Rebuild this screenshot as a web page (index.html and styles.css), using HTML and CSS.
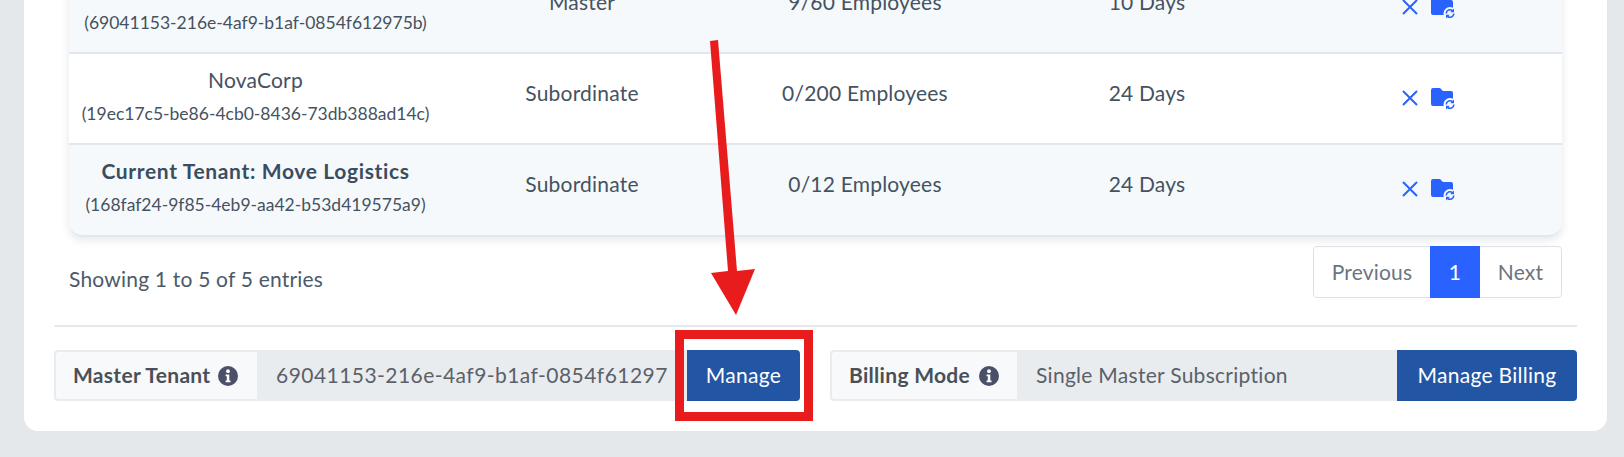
FILE: index.html
```html
<!DOCTYPE html>
<html lang="en">
<head>
<meta charset="utf-8">
<title>Tenants</title>
<link rel="stylesheet" href="styles.css">
</head>
<body>
<svg width="0" height="0" class="defs">
  <symbol id="x" viewBox="0 0 16 16"><path d="M1 1 15 15M15 1 1 15" fill="none" stroke="currentColor" stroke-width="2"/></symbol>
  <symbol id="folder" viewBox="0 0 25 23"><path d="M2 0h7l3 3h8a2 2 0 0 1 2 2v11a2 2 0 0 1-2 2H2a2 2 0 0 1-2-2V2a2 2 0 0 1 2-2z" fill="currentColor"/><circle cx="19" cy="16.500" r="6.500" fill="var(--badge)"/><path d="M15.200 16.500a3.800 3.800 0 0 1 6.300-2.800M22.800 16.500a3.800 3.800 0 0 1-6.300 2.800" fill="none" stroke="currentColor" stroke-width="1.600"/><path d="M23 11.500v3.800h-3.800zM15 21.500v-3.800h3.800z" fill="currentColor"/></symbol>
  <symbol id="info" viewBox="0 0 20 20"><circle cx="10" cy="10" r="10" fill="currentColor"/><circle cx="10" cy="5.200" r="1.900" fill="#fff"/><path d="M7.600 8.400h3.700v6h1.200v1.800H7.600v-1.800h1.200v-4.200H7.600z" fill="#fff"/></symbol>
</svg>
<main class="card">
  <div class="table-wrap">
    <table class="tenants">
      <colgroup><col class="c-name"><col class="c-type"><col class="c-emp"><col class="c-days"><col class="c-act"></colgroup>
      <tbody>
        <tr class="odd">
          <td class="name"><div class="tname">&nbsp;</div><div class="tid">(69041153-216e-4af9-b1af-0854f612975b)</div></td>
          <td>Master</td><td>9/60 Employees</td><td>10 Days</td>
          <td class="acts"><span class="actions"><svg class="ix"><use href="#x"/></svg><svg class="ifo"><use href="#folder"/></svg></span></td>
        </tr>
        <tr>
          <td class="name"><div class="tname">NovaCorp</div><div class="tid">(19ec17c5-be86-4cb0-8436-73db388ad14c)</div></td>
          <td>Subordinate</td><td>0/200 Employees</td><td>24 Days</td>
          <td class="acts"><span class="actions"><svg class="ix"><use href="#x"/></svg><svg class="ifo"><use href="#folder"/></svg></span></td>
        </tr>
        <tr class="odd">
          <td class="name"><div class="tname bold">Current Tenant: Move Logistics</div><div class="tid">(168faf24-9f85-4eb9-aa42-b53d419575a9)</div></td>
          <td>Subordinate</td><td>0/12 Employees</td><td>24 Days</td>
          <td class="acts"><span class="actions"><svg class="ix"><use href="#x"/></svg><svg class="ifo"><use href="#folder"/></svg></span></td>
        </tr>
      </tbody>
    </table>
    <div class="table-foot">
      <div class="showing">Showing 1 to 5 of 5 entries</div>
      <nav class="pager">
        <a class="pg pg-prev">Previous</a><a class="pg pg-cur">1</a><a class="pg pg-next">Next</a>
      </nav>
    </div>
  </div>
  <hr class="rule">
  <div class="groups">
    <div class="group g-master">
      <div class="g-label">Master Tenant <svg class="iinfo"><use href="#info"/></svg></div>
      <div class="g-value">69041153-216e-4af9-b1af-0854f61297</div>
      <button class="g-btn">Manage</button>
    </div>
    <div class="group g-billing">
      <div class="g-label">Billing Mode <svg class="iinfo"><use href="#info"/></svg></div>
      <div class="g-value">Single Master Subscription</div>
      <button class="g-btn">Manage Billing</button>
    </div>
  </div>
</main>
<svg class="annotation" viewBox="0 0 1624 457" width="1624" height="457">
  <path d="M710 41 718 40 737 271 755 269 736 315 711 273 728 271z" fill="#e81c1c"/>
  <path d="M675 330H813V421H675zM684 339V412H804V339z" fill="#e81c1c" fill-rule="evenodd"/>
</svg>
</body>
</html>
```
FILE: styles.css
```css
* { box-sizing: border-box; }
html, body { margin: 0; height: 457px; overflow: hidden; }
body {
  background: #e5e8eb;
  font-family: "Lato", "Noto Sans", sans-serif;
  font-size: 21px;
  letter-spacing: .2px;
  color: #45525f;
  position: relative;
}
.defs { position: absolute; }
.card {
  width: 1583px;
  margin: -37px 0 0 24px;
  padding: 0 30px 30px;
  background: #fff;
  border-radius: 0 0 14px 14px;
}
.table-wrap { padding: 0 15px; }
.tenants {
  width: 1493px;
  table-layout: fixed;
  border-collapse: separate;
  border-spacing: 0;
  border-radius: 0 0 14px 14px;
  box-shadow: 0 3px 8px rgba(40, 60, 90, .12);
}
.c-name { width: 373px; }
.c-type { width: 280px; }
.c-emp { width: 286px; }
.c-days { width: 278px; }
.c-act { width: 276px; }
.tenants td {
  height: 91px;
  padding: 19px 8px 0;
  text-align: center;
  vertical-align: top;
  line-height: 40px;
  border-bottom: 2px solid #e3e7eb;
  background: #fff;
}
.tenants tr.odd td { background: #f6f9fc; --badge: #f6f9fc; }
.tenants tr { --badge: #fff; }
.tenants tr:last-child td { height: 92px; }
.tenants tr:last-child td:first-child { border-bottom-left-radius: 14px; }
.tenants tr:last-child td:last-child { border-bottom-right-radius: 14px; }
.tenants td.name { padding-top: 11px; padding-left: 0; padding-right: 0; }
.tname { line-height: 30px; height: 30px; }
.tname.bold { font-weight: 700; color: #3a4d60; letter-spacing: .65px; }
.tid { font-size: 17.5px; letter-spacing: 0; line-height: 30px; margin-top: 4px; }
.tenants td.acts { padding-top: 36px; padding-left: 18px; line-height: 0; }
.actions { display: inline-flex; align-items: flex-start; gap: 13px; color: #2962ff; }
.ix { width: 16px; height: 16px; }
.ifo { width: 25px; height: 23px; margin-top: -2px; }
.table-foot {
  display: flex;
  justify-content: space-between;
  align-items: flex-start;
  padding-top: 9px;
}
.showing { padding-top: 18px; line-height: 30px; color: #4c5a68; }
.pager {
  display: flex;
  height: 52px;
  border: 1px solid #dee2e6;
  border-radius: 4px;
  line-height: 50px;
  color: #6c757d;
}
.pg { display: block; text-align: center; }
.pg-prev { width: 116px; }
.pg-cur { width: 50px; margin: -1px 0; height: 52px; line-height: 52px; background: #2962ff; color: #fff; }
.pg-next { width: 81px; }
.rule { margin: 27px 0 23px; border: 0; height: 2px; background: #e6e9ec; }
.groups { display: flex; justify-content: space-between; }
.group { display: flex; height: 51px; }
.g-master { width: 746px; }
.g-billing { width: 747px; }
.g-label {
  display: flex;
  align-items: center;
  gap: 8px;
  padding: 0 0 2px 17px;
  flex: none;
  background: #f8f9fa;
  border: 2px solid #e9ecef;
  border-right: 0;
  border-radius: 4px 0 0 4px;
  font-weight: 700;
  color: #495057;
  white-space: nowrap;
  letter-spacing: .3px;
}
.g-billing .g-label { gap: 9px; }
.g-master .g-label { width: 203px; }
.g-billing .g-label { width: 187px; }
.iinfo { width: 20px; height: 20px; color: #4a5068; flex: none; margin-top: 2px; }
.g-value {
  flex: 1;
  min-width: 0;
  padding: 0 19px;
  background: #e9ecef;
  color: #5a6169;
  white-space: nowrap;
  overflow: hidden;
  line-height: 49px;
  letter-spacing: .45px;
}
.g-billing .g-value { letter-spacing: .28px; }
.g-btn {
  flex: none;
  border: 0;
  padding: 0 0 2px;
  background: #2255a4;
  color: #fff;
  font: inherit;
  letter-spacing: .3px;
  border-radius: 0 4px 4px 0;
}
.g-master .g-btn { width: 113px; }
.g-billing .g-btn { width: 180px; }
.annotation { position: absolute; left: 0; top: 0; pointer-events: none; }
```
